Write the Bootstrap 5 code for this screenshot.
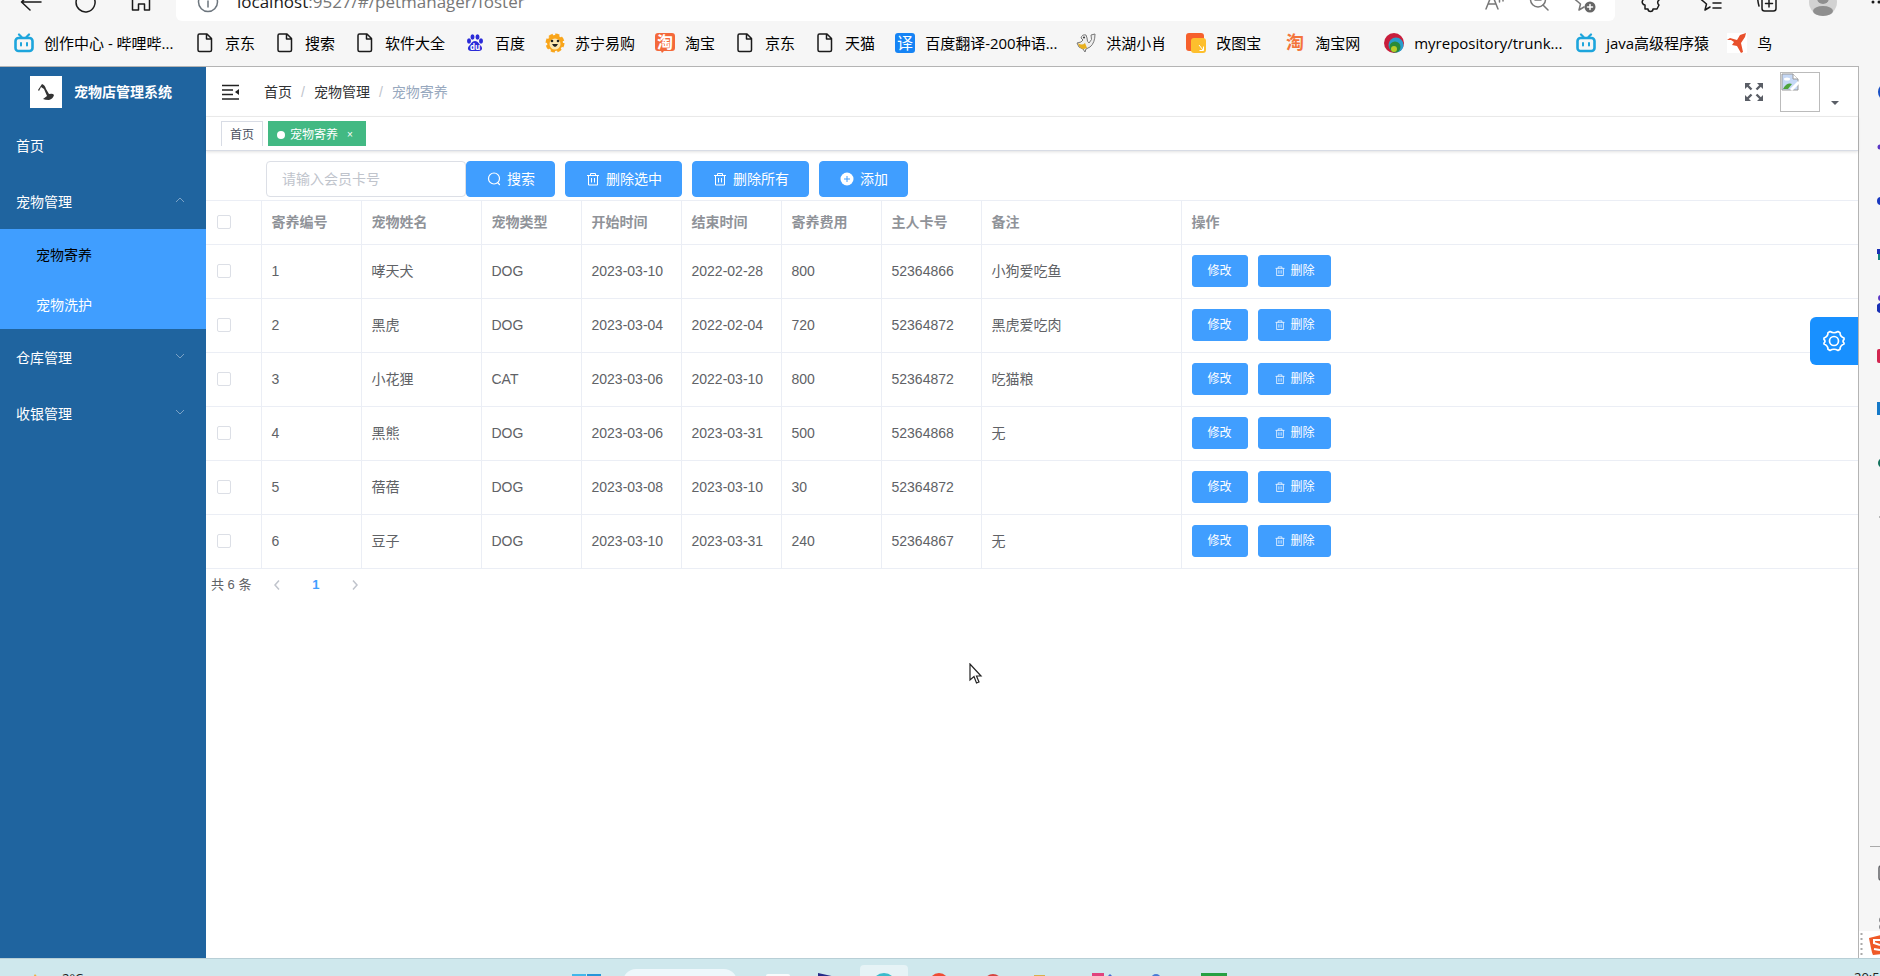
<!DOCTYPE html>
<html lang="zh-CN">
<head>
<meta charset="utf-8">
<meta name="viewport" content="width=device-width, initial-scale=1">
<title>宠物店管理系统</title>
<link href="https://cdn.jsdelivr.net/npm/bootstrap@5.3.0/dist/css/bootstrap.min.css" rel="stylesheet">
<style>
  body { font-family: "Liberation Sans", "Noto Sans CJK SC", sans-serif; font-size: 14px; line-height: 20px; color: #606266; background: #f6f6f6; overflow-x: hidden; }
  a { text-decoration: none; color: inherit; }
  svg { display: block; flex: none; }
  .line-icon { fill: none; stroke: currentColor; stroke-width: 1.5; stroke-linecap: round; stroke-linejoin: round; }

  /* browser chrome */
  .chrome-font { font-family: "Open Sans", "Noto Sans CJK SC", sans-serif; color: #1a1a1a; }
  .chrome-top { height: 42px; margin-top: -19px; padding-left: 20px; }
  .chrome-btn { border: 0; background: none; padding: 0; color: #1a1a1a; }
  .nav-keys { width: 156px; gap: 33px; }
  .address { height: 38px; border-radius: 6px; padding: 0 18px 0 21px; gap: 18px; }
  .address .host { font-size: 17px; line-height: 24px; color: #777; }
  .address .host b { font-weight: 400; color: #1a1a1a; }
  .address-tools { gap: 24px; color: #777; }
  .chrome-right { width: 265px; gap: 18px; padding-left: 24px; }
  .chrome-right .divider { width: 1px; height: 20px; background: #bbb; }
  .user-btn { margin-left: 12px; }
  .bookmarks { height: 43px; padding: 0 0 3px 14px; gap: 20px; font-size: 15px; color: #000; }
  .bookmarks a { gap: 10px; white-space: nowrap; }
  .bm-long { width: 131px; }
  .bm-repo { width: 138px; }
  .bm-java { width: 101px; }

  /* application */
  .app { border-top: 1px solid #b4b4b4; }
  .app-body { border-right: 1px solid #b4b4b4; }
  .sidebar { width: 206px; background: #1f649f; color: #fff; }
  .brand { height: 50px; padding-left: 30px; gap: 12px; font-weight: 700; }
  .menu-item { height: 56px; padding: 2px 20px 0 16px; }
  .menu-item svg { color: #7ba2c6; margin-bottom: 4px; }
  .submenu { background: #409eff; }
  .submenu a { height: 50px; padding-left: 36px; padding-top: 1px; }
  .submenu a.current { color: #000; }
  .topbar { height: 50px; padding: 0 17px 0 16px; border-bottom: 1px solid #eee; }
  .crumbs { margin: 0 0 0 25px; gap: 9px; color: #303133; }
  .crumbs .sep { color: #c0c4cc; }
  .crumbs .now { color: #97a8be; }
  .avatar-btn { border: 0; background: none; padding: 0; gap: 9px; color: #5a5e66; }
  .avatar-btn .caret { margin-bottom: 4px; }
  .tags { height: 34px; padding: 4px 15px 0; gap: 5px; border-bottom: 1px solid #d8dce5; box-shadow: 0 1px 3px rgba(0,0,0,.12); font-size: 12px; }
  .tag { height: 25px; padding: 2px 8px 0; border: 1px solid #d8dce5; border-bottom: 0; color: #495060; }
  .tag.on { background: #42b983; border-color: #42b983; color: #fff; gap: 5px; }
  .tag.on i { width: 8px; height: 8px; border-radius: 50%; background: #fff; }
  .tag.on button { border: 0; background: none; color: #fff; padding: 0; width: 14px; font-size: 10px; line-height: 20px; }
  .tools { padding: 10px 0 3px 60px; gap: 10px; }
  .tools input { width: 200px; height: 36px; border-radius: 4px; border: 1px solid #dcdfe6; padding: 0 15px; font-size: 14px; margin-right: -10px; }
  .tools input::placeholder { color: #c0c4cc; opacity: 1; }
  .btn-el { --bs-btn-bg: #409eff; --bs-btn-color: #fff; --bs-btn-border-color: #409eff; --bs-btn-hover-bg: #66b1ff; --bs-btn-hover-color: #fff; --bs-btn-hover-border-color: #66b1ff; --bs-btn-border-radius: 4px; --bs-btn-font-size: 14px; --bs-btn-padding-x: 19px; --bs-btn-padding-y: 7px; --bs-btn-line-height: 20px; display: inline-flex; align-items: center; gap: 5px; height: 36px; }
  .btn-row { --bs-btn-font-size: 12px; --bs-btn-padding-x: 15px; height: 32px; --bs-btn-border-radius: 3px; }
  .row-actions { gap: 10px; }
  .data-table { table-layout: fixed; margin: 0; border-top: 1px solid #ebeef5; --bs-table-bg: transparent; --bs-table-color: #606266; }
  .data-table > :not(caption) > * > * { padding: 0 10px 2px; vertical-align: middle; border: 0 solid #ebeef5; border-width: 0 1px 1px 0; height: 54px; }
  .data-table > thead > tr > th { height: 44px; color: #909399; font-weight: 700; }
  .data-table > :not(caption) > * > :first-child { padding-left: 11px; }
  .data-table .form-check-input { margin: 0; width: 14px; height: 14px; border: 1px solid #dcdfe6; border-radius: 2px; display: block; }
  .data-table > :not(caption) > * > :last-child { border-right: 0; }
  .c-check { width: 55px; } .c-100 { width: 100px; } .c-120 { width: 120px; } .c-200 { width: 200px; }
  .pager { padding: 6px 5px; font-size: 13px; }
  .pager > span { margin-right: 6px; }
  .pager button { border: 0; background: none; color: #c0c4cc; width: 39px; padding: 0; display: flex; justify-content: center; }
  .pager .page-now { color: #409eff; font-weight: 700; }
  .settings-btn { top: 250px; right: 0; width: 48px; height: 48px; border: 0; border-radius: 6px 0 0 6px; background: #1890ff; color: #fff; padding: 0; }
  .pointer { left: 969px; top: 596px; pointer-events: none; }

  /* edge strip and taskbar */
  .edge { width: 21px; }
  .edge-apps { padding: 15px 0 0 18px; gap: 33px; }
  .edge-foot { gap: 18px; padding-left: 11px; }
  .edge-foot hr { margin: 0; opacity: 1; border-color: #aaa; }
  .ime { height: 27px; }
  .taskbar { height: 18px; background: #cfe8ed; border-top: 1px solid #b8cfd6; padding-left: 24px; color: #222; }
  .weather { width: 547px; font-size: 13px; line-height: 18px; padding-top: 10px; gap: 16px; }
  .clock { width: 26px; font-size: 13px; line-height: 18px; padding-top: 9px; }
</style>
</head>
<body class="d-flex flex-column min-vh-100">

<svg width="0" height="0" class="position-absolute" aria-hidden="true">
  <symbol id="doc" viewBox="0 0 20 20"><path d="M4.500 1h7.500l4.500 4.500V17a1.500 1.500 0 0 1-1.500 1.500H4.500A1.500 1.500 0 0 1 3 17V2.500A1.500 1.500 0 0 1 4.500 1zM11.500 1v5h5" fill="none" stroke="#1a1a1a" stroke-width="1.500" stroke-linejoin="round"/></symbol>
  <symbol id="bili" viewBox="0 0 20 20"><g fill="none" stroke="#1da5dc" stroke-linecap="round"><rect x="1.500" y="5" width="17" height="13" rx="3" stroke-width="2.600"/><path d="M5 1.500 7.500 4M15 1.500 12.500 4" stroke-width="2.200"/><path d="M7 10v2.500M13 10v2.500" stroke-width="2"/></g></symbol>
  <symbol id="trash" viewBox="-1 -1 16 16"><path d="M1 3.500h12M2.500 3.500v9.500h9V3.500M4.500 3.500V1.500h5v2M5.500 6v4.500M8.500 6v4.500" fill="none" stroke="currentColor"/></symbol>
  <symbol id="down" viewBox="0 0 12 12"><path d="M2 4l4 4 4-4" fill="none" stroke="currentColor"/></symbol>
  <symbol id="star" viewBox="0 0 24 24"><path d="M6 20 7.500 14 1 8.500 8 8l3-6 3 6 7 .5M6 20l5-3"/></symbol>
</svg>

<header class="chrome-font">
  <div class="chrome-top d-flex align-items-center">
    <div class="nav-keys d-flex align-items-center flex-shrink-0">
      <button class="chrome-btn" aria-label="返回"><svg class="line-icon" width="22" height="22" viewBox="0 0 22 22"><path d="M21 11H2M10 3l-8.500 8 8.500 8"/></svg></button>
      <button class="chrome-btn" aria-label="刷新"><svg class="line-icon" width="22" height="22" viewBox="0 0 22 22"><path d="M19 7a9.500 9.500 0 1 1-5-4.500"/></svg></button>
      <button class="chrome-btn" aria-label="主页"><svg class="line-icon" width="22" height="22" viewBox="0 0 22 22"><path d="M2.500 8.500 11 2l8.500 6.500V19h-5v-6h-6v6h-6z"/></svg></button>
    </div>
    <div class="address bg-white d-flex align-items-center flex-grow-1">
      <svg class="line-icon text-secondary" width="22" height="22" viewBox="0 0 22 22"><circle cx="11" cy="11" r="9.500"/><path d="M11 10v6M11 6v.5"/></svg>
      <a class="host flex-grow-1" href="#foster"><b>localhost</b>:9527/#/petmanager/foster</a>
      <div class="address-tools d-flex align-items-center">
        <svg class="line-icon" width="20" height="22" viewBox="0 0 20 22"><path d="M1 18 7 3l6 15M3 13h8M14.500 7v4M18 7v3"/></svg>
        <svg class="line-icon" width="20" height="22" viewBox="0 0 20 22"><circle cx="9" cy="8.500" r="7.500"/><path d="m14 14 5 5M6 9h6"/></svg>
        <svg class="line-icon" width="24" height="24" viewBox="0 0 24 24"><use href="#star"/><circle cx="17" cy="17" r="5.500" fill="#666" stroke="none"/><path d="M17 14.500v5M14.500 17h5" stroke="#fff"/></svg>
      </div>
    </div>
    <div class="chrome-right d-flex align-items-center flex-shrink-0 overflow-hidden">
      <button class="chrome-btn" aria-label="扩展"><svg class="line-icon" width="24" height="22" viewBox="0 0 24 22"><path d="M4 4h5a3 3 0 0 1 6 0h5v5a3 3 0 0 0 0 5l-2 4h-4a2.500 2.500 0 0 1-5 0H6v-4a3 3 0 0 1-2-5z"/></svg></button>
      <span class="divider"></span>
      <button class="chrome-btn" aria-label="收藏夹"><svg class="line-icon" width="24" height="24" viewBox="0 0 24 24"><use href="#star"/><path d="M14 13h8M14 18h8"/></svg></button>
      <button class="chrome-btn ms-3" aria-label="集锦"><svg class="line-icon" width="22" height="22" viewBox="0 0 22 22"><rect x="5" y="5" width="14" height="15" rx="2.500"/><path d="M12 9v7M8.500 12.500h7M2 15Q0 8 1 3h13"/></svg></button>
      <button class="chrome-btn user-btn" aria-label="用户"><svg width="28" height="28" viewBox="0 0 28 28"><circle cx="14" cy="14" r="14" fill="#d2d2d2"/><circle cx="14" cy="10" r="6" fill="#8f8f8f"/><ellipse cx="14" cy="23" rx="10" ry="5" fill="#8f8f8f"/></svg></button>
      <button class="chrome-btn ms-2" aria-label="更多"><svg width="18" height="6" viewBox="0 0 18 6" fill="#1a1a1a"><circle cx="10" cy="3" r="1.500"/><circle cx="16" cy="3" r="1.500"/></svg></button>
    </div>
  </div>
  <nav class="bookmarks d-flex align-items-center" aria-label="书签">
    <a href="#b1" class="d-flex align-items-center"><svg width="20" height="20"><use href="#bili"/></svg><span class="bm-long">创作中心 - 哔哩哔...</span></a>
    <a href="#b2" class="d-flex align-items-center"><svg width="20" height="20"><use href="#doc"/></svg>京东</a>
    <a href="#b3" class="d-flex align-items-center"><svg width="20" height="20"><use href="#doc"/></svg>搜索</a>
    <a href="#b4" class="d-flex align-items-center"><svg width="20" height="20"><use href="#doc"/></svg>软件大全</a>
    <a href="#b5" class="d-flex align-items-center"><svg width="20" height="20" viewBox="0 0 20 20" fill="#2b2bd8"><ellipse cx="4" cy="8" rx="2" ry="2.700"/><ellipse cx="7.500" cy="4" rx="2" ry="2.700"/><ellipse cx="12.500" cy="4" rx="2" ry="2.700"/><ellipse cx="16" cy="8" rx="2" ry="2.700"/><path d="M10 8c3 0 4 3 6 5s1 5-2 5H6c-3 0-4-3-2-5s3-5 6-5z"/><text x="5" y="17" font-size="8" font-weight="700" fill="#fff">du</text></svg>百度</a>
    <a href="#b6" class="d-flex align-items-center"><svg width="20" height="20" viewBox="0 0 20 20"><circle cx="10" cy="10" r="8" fill="#f9a51a" stroke="#f9a51a" stroke-width="3" stroke-dasharray="4 2.280"/><circle cx="10" cy="11" r="5.500" fill="#fde6b0"/><circle cx="7" cy="8" r="1.300" fill="#222"/><circle cx="13" cy="8" r="1.300" fill="#222"/><path d="M7 11h6q-3 6-6 0z" fill="#222"/></svg>苏宁易购</a>
    <a href="#b7" class="d-flex align-items-center"><svg width="20" height="20" viewBox="0 0 20 20"><path d="M3 0h14a3 3 0 0 1 3 3v12a3 3 0 0 1-3 3H9l-2 2-1-2H3a3 3 0 0 1-3-3V3a3 3 0 0 1 3-3z" fill="#f4693b"/><text x="2" y="15" font-size="16" font-weight="700" fill="#fff">淘</text></svg>淘宝</a>
    <a href="#b8" class="d-flex align-items-center"><svg width="20" height="20"><use href="#doc"/></svg>京东</a>
    <a href="#b9" class="d-flex align-items-center"><svg width="20" height="20"><use href="#doc"/></svg>天猫</a>
    <a href="#b10" class="d-flex align-items-center"><svg width="20" height="20" viewBox="0 0 20 20"><rect width="20" height="20" rx="3" fill="#1684f5"/><text x="2" y="16" font-size="16" fill="#fff">译</text></svg><span class="bm-long">百度翻译-200种语...</span></a>
    <a href="#b11" class="d-flex align-items-center"><svg width="20" height="20" viewBox="0 0 20 20"><path d="M5 5q1-4 5-3l1 3q0 4 2 5 4-3 2-8l4-1q0 9-5 13l-4 2-1 3-2-3Q2 15 1 10l4-1 2-2z" fill="#eee" stroke="#777"/><path d="M2 10q4 3 7 0l2 5-3 1q-5 0-6-6z" fill="#e8b020"/><circle cx="8" cy="4.500" r="1" fill="#333"/></svg>洪湖小肖</a>
    <a href="#b12" class="d-flex align-items-center me-1"><svg width="20" height="20" viewBox="0 0 20 20"><rect width="18" height="18" rx="3" fill="#f6602c"/><rect x="5" y="5" width="15" height="15" rx="3" fill="#fdbf2d"/><path d="m13 12 4 5M17.500 13.500v4h-4" stroke="#fff" fill="none"/></svg>改图宝</a>
    <a href="#b13" class="d-flex align-items-center me-1"><svg width="20" height="20" viewBox="0 0 20 20"><text x="1" y="16" font-size="18" font-weight="700" fill="#f4743b">淘</text></svg>淘宝网</a>
    <a href="#b14" class="d-flex align-items-center me-1"><svg width="20" height="20" viewBox="0 0 20 20"><circle cx="10" cy="10" r="10" fill="#c81e3c"/><circle cx="12" cy="12" r="7.500" fill="#2a9ccc"/><circle cx="11" cy="14" r="5.500" fill="#2a8a38"/><circle cx="10" cy="16" r="3" fill="#b8cc28"/></svg><span class="bm-repo">myrepository/trunk...</span></a>
    <a href="#b15" class="d-flex align-items-center"><svg width="20" height="20"><use href="#bili"/></svg><span class="bm-java">java高级程序猿</span></a>
    <a href="#b16" class="d-flex align-items-center"><svg width="20" height="20" viewBox="0 0 20 20"><rect width="20" height="20" fill="#fff"/><path d="M0 7 3 5l7 2 3-5 6-2-1 4-4 6 2 9-2 1-4-7-5-1 2-3-3-2z" fill="#e8502c"/></svg>鸟</a>
  </nav>
</header>

<div class="d-flex flex-grow-1">
  <div class="app app-body d-flex flex-grow-1 bg-white position-relative">
    <aside class="sidebar flex-shrink-0">
      <a href="#home" class="brand d-flex align-items-center">
        <svg width="32" height="32" viewBox="0 0 32 32"><rect width="32" height="32" fill="#fff"/><path d="M8 14 12 8q3 1 4 5l3 5q4-1 5 1-1 4-5 5-4 0-6-1l4-3-3-7-3-2-2 4z" fill="#333"/></svg>
        <span>宠物店管理系统</span>
      </a>
      <nav aria-label="主菜单">
        <a href="#home" class="menu-item d-flex align-items-center">首页</a>
        <a href="#pet" class="menu-item d-flex align-items-center justify-content-between">宠物管理<svg width="12" height="12" viewBox="0 0 12 12"><path d="M2 8l4-4 4 4" fill="none" stroke="currentColor"/></svg></a>
        <div class="submenu">
          <a href="#foster" class="current d-flex align-items-center">宠物寄养</a>
          <a href="#wash" class="d-flex align-items-center">宠物洗护</a>
        </div>
        <a href="#store" class="menu-item d-flex align-items-center justify-content-between">仓库管理<svg width="12" height="12"><use href="#down"/></svg></a>
        <a href="#cash" class="menu-item d-flex align-items-center justify-content-between">收银管理<svg width="12" height="12"><use href="#down"/></svg></a>
      </nav>
    </aside>

    <main class="flex-grow-1">
      <div class="topbar d-flex align-items-center">
        <svg width="17" height="16" viewBox="0 0 17 16"><path d="M0 1.500h17M0 6h11M0 10.500h11M0 15h17" stroke="#222" stroke-width="1.600"/><path d="M17 5v6l-4-3z" fill="#222"/></svg>
        <nav class="crumbs d-flex flex-grow-1" aria-label="面包屑">
          <a href="#home">首页</a><span class="sep">/</span><a href="#pet">宠物管理</a><span class="sep">/</span><span class="now">宠物寄养</span>
        </nav>
        <svg class="me-3" width="20" height="20" viewBox="0 0 20 20" fill="none" stroke="#5a5e66" stroke-width="2.400"><path d="M2 2l5.500 5.500M18 2l-5.500 5.500M2 18l5.500-5.500M18 18l-5.500-5.500"/><path d="M1 1h6L1 7zM19 1v6l-6-6zM1 19v-6l6 6zM19 19h-6l6-6z" fill="#5a5e66" stroke="none"/></svg>
        <button class="avatar-btn d-flex align-items-end" aria-label="用户菜单">
          <svg width="40" height="40" viewBox="0 0 40 40"><rect x=".5" y=".5" width="39" height="39" fill="#fff" stroke="#bbb"/><path d="M2 2h11l5 5v11H2z" fill="#c5d8f6" stroke="#999"/><path d="M3 17q4-7 9-5l-4 5z" fill="#4ba33b"/><path d="m11 18 8-8" stroke="#fff" stroke-width="3"/><path d="M13 2v5h5" fill="#fff" stroke="#999"/><ellipse cx="7" cy="7" rx="3" ry="1.500" fill="#fff"/></svg>
          <svg class="caret" width="12" height="10" viewBox="0 0 12 10"><path d="M2 3h8L6 7z" fill="#5a5e66"/></svg>
        </button>
      </div>

      <div class="tags d-flex">
        <a href="#home" class="tag d-flex align-items-center">首页</a>
        <div class="tag on d-flex align-items-center"><i></i><span>宠物寄养</span><button aria-label="关闭">×</button></div>
      </div>

      <form class="tools d-flex" onsubmit="return false">
        <input type="text" placeholder="请输入会员卡号" aria-label="会员卡号">
        <button class="btn btn-el" type="submit"><svg width="16" height="16" viewBox="0 0 16 16" class="line-icon"><circle cx="8" cy="7.500" r="5.500" stroke-width="1.200"/><path d="m12 12 1.500 1.500" stroke-width="1.200"/></svg>搜索</button>
        <button class="btn btn-el" type="button"><svg width="16" height="16"><use href="#trash"/></svg>删除选中</button>
        <button class="btn btn-el" type="button"><svg width="16" height="16"><use href="#trash"/></svg>删除所有</button>
        <button class="btn btn-el" type="button"><svg width="16" height="16" viewBox="0 0 16 16"><circle cx="8" cy="8" r="6.500" fill="#fff"/><path d="M8 5v6M5 8h6" stroke="#409eff"/></svg>添加</button>
      </form>

      <table class="table data-table">
        <colgroup><col class="c-check"><col class="c-100"><col class="c-120"><col class="c-100"><col class="c-100"><col class="c-100"><col class="c-100"><col class="c-100"><col class="c-200"><col></colgroup>
        <thead>
          <tr><th><input class="form-check-input" type="checkbox" aria-label="全选"></th><th>寄养编号</th><th>宠物姓名</th><th>宠物类型</th><th>开始时间</th><th>结束时间</th><th>寄养费用</th><th>主人卡号</th><th>备注</th><th>操作</th></tr>
        </thead>
        <tbody>
          <tr><td><input class="form-check-input" type="checkbox" aria-label="选择 1"></td><td>1</td><td>哮天犬</td><td>DOG</td><td>2023-03-10</td><td>2022-02-28</td><td>800</td><td>52364866</td><td>小狗爱吃鱼</td><td><div class="row-actions d-flex"><button class="btn btn-el btn-row">修改</button><button class="btn btn-el btn-row"><svg width="12" height="12"><use href="#trash"/></svg>删除</button></div></td></tr>
          <tr><td><input class="form-check-input" type="checkbox" aria-label="选择 2"></td><td>2</td><td>黑虎</td><td>DOG</td><td>2023-03-04</td><td>2022-02-04</td><td>720</td><td>52364872</td><td>黑虎爱吃肉</td><td><div class="row-actions d-flex"><button class="btn btn-el btn-row">修改</button><button class="btn btn-el btn-row"><svg width="12" height="12"><use href="#trash"/></svg>删除</button></div></td></tr>
          <tr><td><input class="form-check-input" type="checkbox" aria-label="选择 3"></td><td>3</td><td>小花狸</td><td>CAT</td><td>2023-03-06</td><td>2022-03-10</td><td>800</td><td>52364872</td><td>吃猫粮</td><td><div class="row-actions d-flex"><button class="btn btn-el btn-row">修改</button><button class="btn btn-el btn-row"><svg width="12" height="12"><use href="#trash"/></svg>删除</button></div></td></tr>
          <tr><td><input class="form-check-input" type="checkbox" aria-label="选择 4"></td><td>4</td><td>黑熊</td><td>DOG</td><td>2023-03-06</td><td>2023-03-31</td><td>500</td><td>52364868</td><td>无</td><td><div class="row-actions d-flex"><button class="btn btn-el btn-row">修改</button><button class="btn btn-el btn-row"><svg width="12" height="12"><use href="#trash"/></svg>删除</button></div></td></tr>
          <tr><td><input class="form-check-input" type="checkbox" aria-label="选择 5"></td><td>5</td><td>蓓蓓</td><td>DOG</td><td>2023-03-08</td><td>2023-03-10</td><td>30</td><td>52364872</td><td></td><td><div class="row-actions d-flex"><button class="btn btn-el btn-row">修改</button><button class="btn btn-el btn-row"><svg width="12" height="12"><use href="#trash"/></svg>删除</button></div></td></tr>
          <tr><td><input class="form-check-input" type="checkbox" aria-label="选择 6"></td><td>6</td><td>豆子</td><td>DOG</td><td>2023-03-10</td><td>2023-03-31</td><td>240</td><td>52364867</td><td>无</td><td><div class="row-actions d-flex"><button class="btn btn-el btn-row">修改</button><button class="btn btn-el btn-row"><svg width="12" height="12"><use href="#trash"/></svg>删除</button></div></td></tr>
        </tbody>
      </table>

      <div class="pager d-flex align-items-center">
        <span>共 6 条</span>
        <button aria-label="上一页"><svg width="12" height="12" viewBox="0 0 12 12"><path d="M8 1.500 4 6l4 4.500" fill="none" stroke="currentColor" stroke-width="1.500"/></svg></button>
        <button class="page-now">1</button>
        <button aria-label="下一页"><svg width="12" height="12" viewBox="0 0 12 12"><path d="m4 1.500 4 4.500-4 4.500" fill="none" stroke="currentColor" stroke-width="1.500"/></svg></button>
      </div>
    </main>

    <button class="settings-btn position-absolute d-flex align-items-center justify-content-center" aria-label="设置">
      <svg width="24" height="24" viewBox="0 0 24 24" fill="none" stroke="currentColor" stroke-width="1.700" stroke-linejoin="round"><circle cx="12" cy="12" r="4.500"/><path d="M8 2.500Q12 5 16 2.500l2 1.200q0 3.800 4 5.300v1.500q-2 1.500 0 3.500v1q-4 1.500-4 5.300l-2 1.200q-4-2.500-8 0l-2-1.200Q6 16.500 2 15v-1q2-2 0-3.500V9q4-1.500 4-5.300z"/></svg>
    </button>
    <svg class="pointer position-absolute" width="14" height="22" viewBox="0 0 14 22"><path d="M1 1v16l4-3.500 2.500 6.500 2.500-1-2.500-6H12z" fill="#fff" stroke="#222" stroke-width="1.200"/></svg>
  </div>

  <aside class="edge d-flex flex-column justify-content-between flex-shrink-0 overflow-hidden" aria-label="边栏">
    <div class="edge-apps d-flex flex-column">
      <svg width="20" height="20"><circle cx="10" cy="11" r="9" fill="#174fc4"/></svg>
      <svg width="20" height="20"><circle cx="3" cy="13" r="2.500" fill="#5a35c5"/></svg>
      <svg width="20" height="20"><circle cx="4" cy="14" r="4" fill="#1838c0"/></svg>
      <svg width="20" height="20"><path d="M0 9h20v5H0z" fill="#1930b5"/><path d="M1 14h19v6H1z" fill="#12807f"/></svg>
      <svg width="20" height="20"><circle cx="4" cy="5" r="3" fill="#5a35c5"/><circle cx="4" cy="15" r="5" fill="#1930b5"/></svg>
      <svg width="20" height="20"><rect y="3" width="20" height="14" rx="2" fill="#d32650"/></svg>
      <svg width="20" height="20"><rect y="3" width="20" height="13" fill="#1579c8"/></svg>
      <svg width="20" height="20"><circle cx="6" cy="11" r="5" fill="#12715c"/></svg>
      <svg width="20" height="20"><path d="M2 12h16" stroke="#777"/></svg>
    </div>
    <div>
      <div class="edge-foot d-flex flex-column">
        <hr>
        <svg class="ms-2" width="16" height="16"><rect x="1" y="1" width="14" height="14" rx="2" class="line-icon"/></svg>
        <svg class="ms-2 mt-3" width="16" height="16"><circle cx="5" cy="5" r="3" class="line-icon"/><circle cx="6" cy="12" r="4" class="line-icon"/></svg>
      </div>
      <div class="ime bg-white"><svg width="21" height="26" viewBox="0 0 21 26"><path d="M2.500 2v22" stroke="#aaa" stroke-width="2" stroke-dasharray="2 3"/><path d="m10 7 12-3v19l-8 1q-1-1-4-17z" fill="#ef5a28"/><path d="M21 9h-6v3l6 2M15 18l6 1" fill="none" stroke="#fff" stroke-width="2"/></svg></div>
    </div>
  </aside>
</div>

<footer class="taskbar chrome-font d-flex overflow-hidden">
  <div class="weather d-flex flex-shrink-0"><svg width="22" height="10" viewBox="0 0 22 10"><path d="m8 10 3-5 4 5z" fill="#f0b040"/></svg>2°C</div>
  <svg width="670" height="18" viewBox="0 0 670 18"><path d="M1 15h14v3H1z" fill="#43b7ea"/><path d="M16 15h14v3H16z" fill="#2695d8"/><rect x="52" y="10" width="114" height="26" rx="13" fill="#eef7fb"/><rect x="195" y="15" width="24" height="8" rx="2" fill="#f7fbfc"/><path d="m247 14 18 4h-18z" fill="#262c88"/><rect x="289" y="6" width="48" height="26" rx="4" fill="#e6f3f6"/><circle cx="313" cy="26" r="12" fill="#3bbccc"/><circle cx="368" cy="24" r="10" fill="#ef4c34"/><circle cx="422" cy="24" r="9" fill="#d64540"/><path d="M463 16h11v2h-11z" fill="#d9b04c"/><path d="M521 14h12v4h-12z" fill="#e0437c"/><path d="m536 18 3-3 3 3z" fill="#4567d0"/><circle cx="585" cy="20" r="5" fill="#4a7bd6"/><path d="M630 14h26v4h-26z" fill="#27a043"/></svg>
  <div class="clock ms-auto text-nowrap overflow-hidden">20:53</div>
</footer>

<script src="https://cdn.jsdelivr.net/npm/bootstrap@5.3.0/dist/js/bootstrap.bundle.min.js"></script>
</body>
</html>
